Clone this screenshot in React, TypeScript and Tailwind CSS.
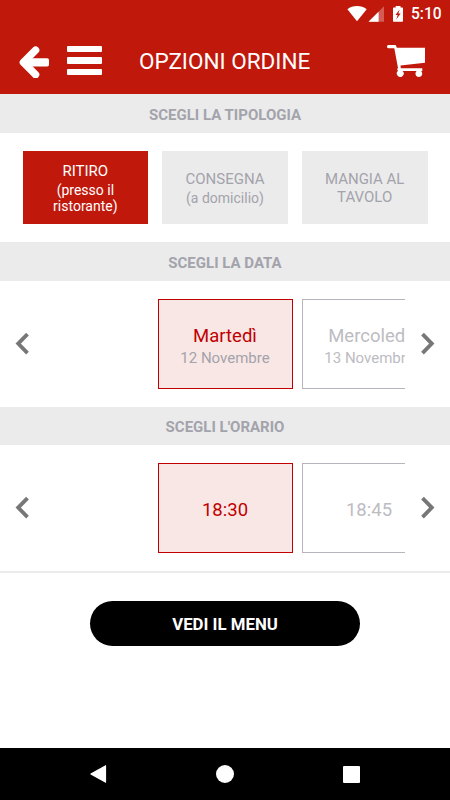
import { clsx } from "clsx";
import type { ReactNode } from "react";

type OrderType = { title: string; detail?: string; selected?: boolean };
type Slot = { title: string; detail?: string; selected?: boolean };

const ORDER_TYPES: OrderType[] = [
  { title: "RITIRO", detail: "(presso il ristorante)", selected: true },
  { title: "CONSEGNA", detail: "(a domicilio)" },
  { title: "MANGIA AL TAVOLO" },
];

const DATES: Slot[] = [
  { title: "Martedì", detail: "12 Novembre", selected: true },
  { title: "Mercoledì", detail: "13 Novembre" },
];

const TIMES: Slot[] = [
  { title: "18:30", selected: true },
  { title: "18:45" },
];

function StatusBar() {
  return (
    <div className="flex h-[27px] items-center justify-end pr-[9px] text-white">
      <svg width="57" height="16" viewBox="347 5 57 16" fill="currentColor" aria-hidden="true">
        <path d="M357 20.3 347.4 8.2C350 6.1 353.400 5 357 5s7 1.100 9.700 3.200Z" />
        <path d="M384 5.300V20.800H368.500Z" opacity=".3" />
        <path d="M378.600 10.700V20.800H368.500Z" />
        <path
          fillRule="evenodd"
          d="M395.700 6.400V5h4.800v1.400h1.500c.6 0 1 .4 1 1v12.400c0 .6-.4 1-1 1h-8c-.6 0-1-.4-1-1V7.400c0-.6.4-1 1-1ZM399.600 8.500l-4.100 5.400h2.200l-1.500 4.600 4.500-6h-2.300Z"
        />
      </svg>
      <span className="ml-[7px] w-[30px] pt-[2px] text-[15.600px] leading-none font-medium">
        5:10
      </span>
    </div>
  );
}

function TopBar() {
  return (
    <div className="flex h-[67px] items-center pl-[18px] text-white">
      <button type="button" aria-label="Indietro">
        <svg width="32" height="34" viewBox="18 43.500 32 34" fill="none" aria-hidden="true">
          <path
            d="M35.600 49.700 23.400 61.900l12.200 12.200"
            stroke="currentColor"
            strokeWidth="7.400"
            strokeLinecap="round"
            strokeLinejoin="round"
          />
          <rect x="24" y="57.800" width="25" height="8.200" rx="1.800" fill="currentColor" />
        </svg>
      </button>
      <button type="button" aria-label="Menu" className="ml-[17px] flex w-[35px] flex-col gap-[5px]">
        <span className="h-[6.500px] rounded-[1px] bg-white" />
        <span className="h-[6.500px] rounded-[1px] bg-white" />
        <span className="h-[6.500px] rounded-[1px] bg-white" />
      </button>
      <h1 className="ml-[37px] w-[175px] pt-[2px] text-[22.500px] leading-none whitespace-nowrap">
        OPZIONI ORDINE
      </h1>
      <button type="button" aria-label="Carrello" className="ml-[72px]">
        <svg width="40" height="36" viewBox="386 43 40 36" fill="currentColor" aria-hidden="true">
          <path d="M388.500 45h6.100c.9 0 1.500.5 1.700 1.300l.5 1.500h28.200v14.900l-24.500 2.900.3 2.600h21.500v2.800h-1.300a3.400 3.400 0 1 1-4.300 0h-14.100a3.400 3.400 0 1 1-4.500-.2c-1.100-.9-1.200-1.900-.1-2.900l-3.700-19.700h-5.800a1.600 1.600 0 0 1 0-3.200Z" />
        </svg>
      </button>
    </div>
  );
}

function SectionHeading({ children }: { children: ReactNode }) {
  return (
    <h2 className="flex h-[38.500px] items-center justify-center bg-[#ebebeb] pt-[3.500px] text-[15px] leading-none font-bold text-[#a3a3ab]">
      {children}
    </h2>
  );
}

function OrderTypeCard({ title, detail, selected }: OrderType) {
  return (
    <button
      type="button"
      className={clsx(
        "flex h-[72.500px] flex-1 flex-col items-center justify-center px-5 pt-[3px] text-center",
        selected ? "bg-[#c1180c] text-white" : "bg-[#ebebeb] text-[#a3a3ab]",
      )}
    >
      <span className="text-[15px] leading-[17.500px]">{title}</span>
      {detail && (
        <span className="mt-[1.500px] text-[14px] leading-[16.500px]">{detail}</span>
      )}
    </button>
  );
}

function Chevron({ right }: { right?: boolean }) {
  return (
    <button
      type="button"
      aria-label={right ? "Successivo" : "Precedente"}
      className="flex w-[45px] shrink-0 justify-center"
    >
      <svg width="15" height="24" viewBox="0 0 15 24" fill="none" aria-hidden="true">
        <path
          d={right ? "M2.500 2.100 11.800 11.600 2.500 21.100" : "M12.500 2.100 3.200 11.600l9.300 9.500"}
          stroke="#777"
          strokeWidth="3.800"
        />
      </svg>
    </button>
  );
}

function SlotCard({ title, detail, selected }: Slot) {
  return (
    <button
      type="button"
      className={clsx(
        "flex h-[90px] w-[135px] shrink-0 flex-col items-center justify-center border-[1.500px] pt-[4px]",
        selected
          ? "border-[#c00000] bg-[#f9e7e6] text-[#c00000]"
          : "border-[#b5b5bc] bg-white text-[#bcbcc2]",
      )}
    >
      <span className="text-[18.500px] leading-[22px]">{title}</span>
      {detail && (
        <span
          className={clsx(
            "mt-[2px] text-[15px] leading-[18px]",
            selected && "text-[#a3a3ab]",
          )}
        >
          {detail}
        </span>
      )}
    </button>
  );
}

function SlotCarousel({ slots }: { slots: Slot[] }) {
  return (
    <div className="flex h-[126px] items-center">
      <Chevron />
      {/* the left padding keeps the selected slot in the middle of the strip */}
      <div className="flex flex-1 gap-[9px] overflow-hidden pl-[112.500px]">
        {slots.map((slot) => (
          <SlotCard key={slot.title} {...slot} />
        ))}
      </div>
      <Chevron right />
    </div>
  );
}

function NavigationBar() {
  return (
    <nav className="flex h-[52px] items-center justify-between bg-black pr-[90px] pl-[90px] text-white">
      <svg width="17" height="18" viewBox="0 0 17 18" fill="currentColor" aria-hidden="true">
        <path d="M15.500.2c.3-.2.600 0 .6.400v16.800c0 .4-.3.600-.6.400L.6 9.500c-.5-.3-.5-.7 0-1Z" />
      </svg>
      <span className="size-[18px] rounded-full bg-white" />
      <span className="size-[17px] rounded-[1px] bg-white" />
    </nav>
  );
}

export default function App() {
  return (
    <div className="flex h-[800px] w-[450px] flex-col overflow-hidden bg-white font-[Roboto,sans-serif]">
      <header className="bg-[#c1180c]">
        <StatusBar />
        <TopBar />
      </header>

      <main className="flex-1">
        <SectionHeading>SCEGLI LA TIPOLOGIA</SectionHeading>
        <div className="flex h-[109.500px] items-center gap-[14px] px-[22.500px]">
          {ORDER_TYPES.map((type) => (
            <OrderTypeCard key={type.title} {...type} />
          ))}
        </div>

        <SectionHeading>SCEGLI LA DATA</SectionHeading>
        <SlotCarousel slots={DATES} />

        <SectionHeading>SCEGLI L'ORARIO</SectionHeading>
        <SlotCarousel slots={TIMES} />

        <div className="flex justify-center border-t-2 border-[#ebebeb] pt-[28px]">
          <button
            type="button"
            className="h-[45px] w-[270px] rounded-full bg-black pt-[2px] text-[16.800px] leading-none font-bold text-white"
          >
            VEDI IL MENU
          </button>
        </div>
      </main>

      <NavigationBar />
    </div>
  );
}
